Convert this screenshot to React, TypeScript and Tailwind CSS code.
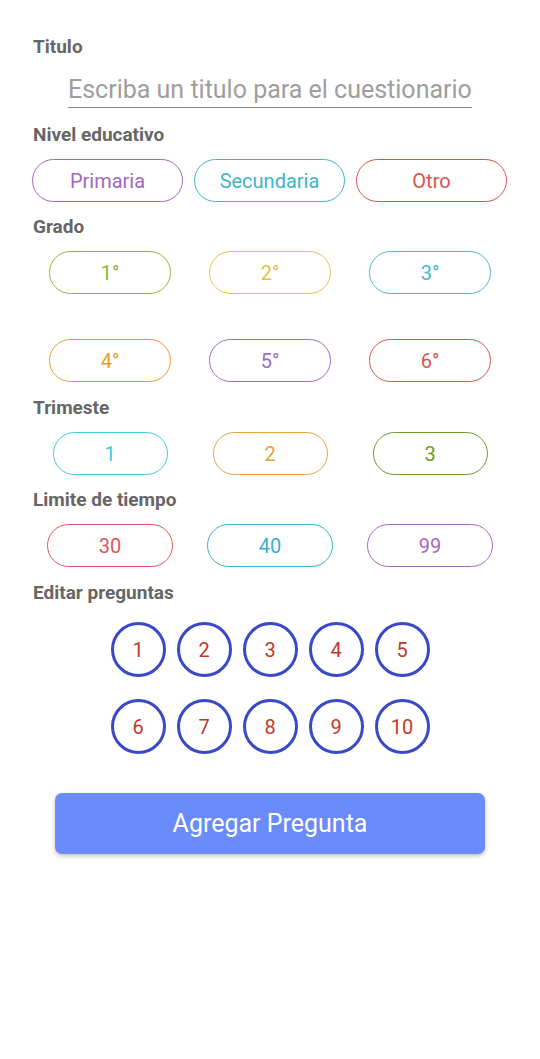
import React from "react";

type Opt = { label: string; color: string };

const niveles: Opt[] = [
  { label: "Primaria", color: "border-[#a566c1] text-[#a566c1]" },
  { label: "Secundaria", color: "border-[#3db5c7] text-[#3db5c7]" },
  { label: "Otro", color: "border-[#d9534f] text-[#d9534f]" },
];

const grados: Opt[] = [
  { label: "1°", color: "border-[#8db53c] text-[#8db53c]" },
  { label: "2°", color: "border-[#e6c447] text-[#e6c447]" },
  { label: "3°", color: "border-[#4db6cc] text-[#4db6cc]" },
  { label: "4°", color: "border-[#e59d2a] text-[#e59d2a]" },
  { label: "5°", color: "border-[#9e6dbf] text-[#9e6dbf]" },
  { label: "6°", color: "border-[#d9534f] text-[#d9534f]" },
];

const trimestres: Opt[] = [
  { label: "1", color: "border-[#3fcde0] text-[#3fcde0]" },
  { label: "2", color: "border-[#e6a23c] text-[#e6a23c]" },
  { label: "3", color: "border-[#6b9b2f] text-[#6b9b2f]" },
];

const tiempos: Opt[] = [
  { label: "30", color: "border-[#e0555a] text-[#e0555a]" },
  { label: "40", color: "border-[#3aaed0] text-[#3aaed0]" },
  { label: "99", color: "border-[#a56ac0] text-[#a56ac0]" },
];

const preguntas = [1, 2, 3, 4, 5, 6, 7, 8, 9, 10];

function Label({ children, className = "" }: { children: React.ReactNode; className?: string }) {
  return (
    <p className={`pl-[33px] text-[19px] leading-[24px] font-bold text-[#666666] ${className}`}>
      {children}
    </p>
  );
}

function Pill({ opt, width }: { opt: Opt; width: string }) {
  return (
    <button
      className={`${width} h-[43px] rounded-full border-[1.5px] bg-white text-[20px] leading-none flex items-center justify-center ${opt.color}`}
    >
      {opt.label}
    </button>
  );
}

export default function App() {
  return (
    <div
      className="w-[540px] min-h-[1059px] bg-white pt-[35px]"
      style={{ fontFamily: "Roboto, 'Noto Sans', sans-serif" }}
    >
      <Label>Titulo</Label>
      <div className="flex justify-center mt-[13px]">
        <input
          className="w-[404px] h-[36px] border-b-[1.5px] border-[#8a8a8a] text-[25px] leading-none text-[#555] placeholder:text-[#9e9e9e] outline-none"
          placeholder="Escriba un titulo para el cuestionario"
        />
      </div>

      <Label className="mt-[15px]">Nivel educativo</Label>
      <div className="flex gap-[11px] pl-[32px] mt-[12px]">
        {niveles.map((o) => (
          <Pill key={o.label} opt={o} width="w-[151px]" />
        ))}
      </div>

      <Label className="mt-[13px]">Grado</Label>
      <div className="grid grid-cols-3 w-[480px] ml-[30px] mt-[12px] gap-y-[45px] justify-items-center">
        {grados.map((o) => (
          <Pill key={o.label} opt={o} width="w-[122px]" />
        ))}
      </div>

      <Label className="mt-[14px]">Trimeste</Label>
      <div className="grid grid-cols-3 w-[480px] ml-[30px] mt-[12px] justify-items-center">
        {trimestres.map((o) => (
          <Pill key={o.label} opt={o} width="w-[115px]" />
        ))}
      </div>

      <Label className="mt-[13px]">Limite de tiempo</Label>
      <div className="grid grid-cols-3 w-[480px] ml-[30px] mt-[12px] justify-items-center">
        {tiempos.map((o) => (
          <Pill key={o.label} opt={o} width="w-[126px]" />
        ))}
      </div>

      <Label className="mt-[14px]">Editar preguntas</Label>
      <div className="grid grid-cols-5 gap-x-[11px] gap-y-[22px] w-[319px] mx-auto mt-[17px]">
        {preguntas.map((n) => (
          <button
            key={n}
            className="w-[55px] h-[55px] rounded-full border-[3px] border-[#3949c8] bg-white text-[20px] leading-none text-[#c0392b] flex items-center justify-center"
          >
            {n}
          </button>
        ))}
      </div>

      <div className="flex justify-center mt-[39px]">
        <button className="w-[430px] h-[61px] rounded-[7px] bg-[#6a8bfa] text-white text-[25px] shadow-[0_2px_4px_rgba(0,0,0,0.25)]">
          Agregar Pregunta
        </button>
      </div>
    </div>
  );
}
